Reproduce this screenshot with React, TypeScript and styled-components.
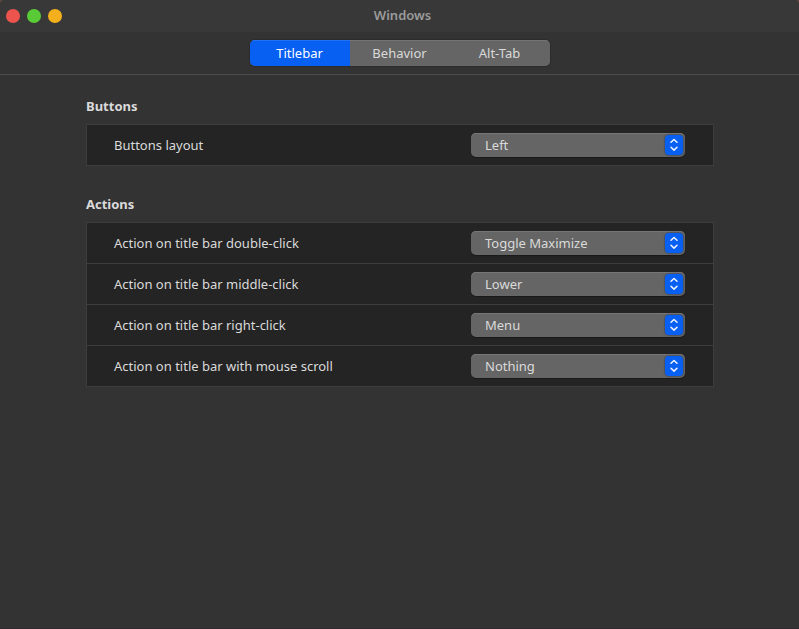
import React, { useId, useState } from "react";
import styled, { createGlobalStyle } from "styled-components";

const GlobalStyle = createGlobalStyle`
  *, *::before, *::after { box-sizing: border-box; }
  body {
    margin: 0;
    background: #5a4640;
    color: #dadada;
    font: 13px/20px "Noto Sans", sans-serif;
  }
  button, select { font: inherit; color: inherit; }
`;

const Window = styled.div`
  min-height: 100vh;
  background: #333333;
  border-bottom: 1px solid #30292e;
  border-radius: 5px 5px 0 0;
  overflow: hidden;
`;

const TitleBar = styled.header`
  display: grid;
  grid-template-columns: 1fr auto 1fr;
  align-items: center;
  height: 32px;
  padding: 0 6px;
  background: #383838;
`;

const WindowControls = styled.div`
  display: flex;
  gap: 7px;
`;

const ControlDot = styled.button<{ $color: string }>`
  width: 14px;
  height: 14px;
  padding: 0;
  border: 0;
  border-radius: 50%;
  background: ${(p) => p.$color};
`;

const Title = styled.h1`
  margin: 0;
  padding: 0 0 2px 6px;
  color: #9b9b9b;
  font-size: 13px;
  font-weight: 600;
`;

const Toolbar = styled.nav`
  display: flex;
  justify-content: center;
  padding: 8px 0;
  border-bottom: 1px solid #4b4b4b;
`;

const TabGroup = styled.div`
  display: flex;
  width: 300px;
  border-radius: 5px;
  overflow: hidden;
  background: #656565;
  box-shadow: 0 0 1px 1px rgba(0, 0, 0, 0.14);
`;

const Tab = styled.button<{ $active: boolean }>`
  flex: 1;
  height: 26px;
  padding: 0;
  border: 0;
  background: ${(p) => (p.$active ? "#0860f2" : "#656565")};
  box-shadow: inset 0 1px ${(p) => (p.$active ? "#2172f3" : "#747474")};
  color: ${(p) => (p.$active ? "#ffffff" : "#dadada")};
`;

const Content = styled.main`
  display: grid;
  gap: 28px;
  padding: 21px 85px 21px 86px;
`;

const Section = styled.section`
  display: grid;
  gap: 8px;
`;

const Heading = styled.h2`
  margin: 0;
  font-size: 13px;
  font-weight: 700;
`;

const Panel = styled.div`
  border: 1px solid #3d3d3d;
  background: #242424;
`;

const Row = styled.div`
  display: flex;
  align-items: center;
  justify-content: space-between;
  padding: 8px 28px 8px 27px;

  & + & {
    border-top: 1px solid #3d3d3d;
  }
`;

const SelectBox = styled.div`
  position: relative;
  width: 214px;
  height: 24px;
`;

const Select = styled.select`
  display: block;
  appearance: none;
  width: 100%;
  height: 24px;
  padding: 0 28px 0 14px;
  border: 0;
  border-radius: 5px;
  background: #656565;
  box-shadow: inset 0 1px #767676, 0 1px 1px rgba(0, 0, 0, 0.3);
`;

const Stepper = styled.span`
  position: absolute;
  top: 2px;
  right: 2px;
  width: 18px;
  height: 20px;
  border-radius: 4px;
  background: #0860f2;
  box-shadow: 0 0 1px 1px rgba(30, 50, 90, 0.35);
  pointer-events: none;

  svg { display: block; }
`;

const tabs = ["Titlebar", "Behavior", "Alt-Tab"];
const mouseActions = ["Toggle Maximize", "Lower", "Menu", "Nothing"];

function SelectRow({ label, value, options }: { label: string; value: string; options: string[] }) {
  const id = useId();
  const [selected, setSelected] = useState(value);
  return (
    <Row>
      <label htmlFor={id}>{label}</label>
      <SelectBox>
        <Select id={id} value={selected} onChange={(e) => setSelected(e.target.value)}>
          {options.map((option) => (
            <option key={option}>{option}</option>
          ))}
        </Select>
        <Stepper aria-hidden="true">
          <svg width="18" height="20" viewBox="0 0 18 20" fill="none" stroke="#f0f5ff" strokeWidth="1.5" strokeLinecap="round" strokeLinejoin="round">
            <path d="M6 7.3 9 4.5l3 2.8M6 12.3l3 2.8 3-2.8" />
          </svg>
        </Stepper>
      </SelectBox>
    </Row>
  );
}

export default function App() {
  const [activeTab, setActiveTab] = useState("Titlebar");
  return (
    <>
      <GlobalStyle />
      <Window>
        <TitleBar>
          <WindowControls>
            <ControlDot $color="#ee544e" aria-label="Close" />
            <ControlDot $color="#58cb36" aria-label="Maximize" />
            <ControlDot $color="#f3b01c" aria-label="Minimize" />
          </WindowControls>
          <Title>Windows</Title>
        </TitleBar>
        <Toolbar>
          <TabGroup role="tablist">
            {tabs.map((tab) => (
              <Tab key={tab} role="tab" aria-selected={tab === activeTab} $active={tab === activeTab} onClick={() => setActiveTab(tab)}>
                {tab}
              </Tab>
            ))}
          </TabGroup>
        </Toolbar>
        <Content>
          <Section>
            <Heading>Buttons</Heading>
            <Panel>
              <SelectRow label="Buttons layout" value="Left" options={["Left", "Right"]} />
            </Panel>
          </Section>
          <Section>
            <Heading>Actions</Heading>
            <Panel>
              <SelectRow label="Action on title bar double-click" value="Toggle Maximize" options={mouseActions} />
              <SelectRow label="Action on title bar middle-click" value="Lower" options={mouseActions} />
              <SelectRow label="Action on title bar right-click" value="Menu" options={mouseActions} />
              <SelectRow label="Action on title bar with mouse scroll" value="Nothing" options={mouseActions} />
            </Panel>
          </Section>
        </Content>
      </Window>
    </>
  );
}
